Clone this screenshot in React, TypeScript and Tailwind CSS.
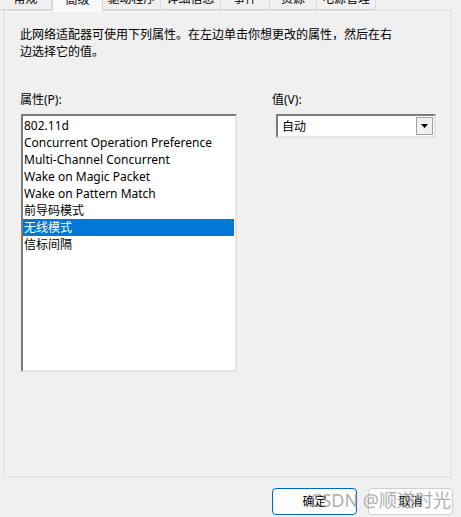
import React from "react";

const tabs = [
  { label: "常规", w: "w-[52px]" },
  { label: "高级", w: "w-[51px]", active: true },
  { label: "驱动程序", w: "w-[58px]" },
  { label: "详细信息", w: "w-[60px]" },
  { label: "事件", w: "w-[49px]" },
  { label: "资源", w: "w-[47px]" },
  { label: "电源管理", w: "w-[59px]" },
];

const items = [
  "802.11d",
  "Concurrent Operation Preference",
  "Multi-Channel Concurrent",
  "Wake on Magic Packet",
  "Wake on Pattern Match",
  "前导码模式",
  "无线模式",
  "信标间隔",
];

const font = { fontFamily: '"Noto Sans", "Noto Sans CJK SC", sans-serif' };

export default function App() {
  return (
    <div
      className="relative w-[461px] h-[517px] overflow-hidden bg-[#f0f0f0] text-[12px] text-black"
      style={font}
    >
      {/* tabs, mostly scrolled off the top */}
      <div className="flex h-[10px] -mt-0 overflow-visible">
        {tabs.map((t) => (
          <div
            key={t.label}
            className={`${t.w} h-[22px] -mt-[12px] flex items-center justify-center leading-[17px] border-r border-[#d9d9d9] ${
              t.active ? "bg-[#f9f9f9] h-[23px] relative z-10 border-l" : "bg-[#f0f0f0] border-b"
            }`}
          >
            {t.label}
          </div>
        ))}
      </div>

      {/* property panel */}
      <div className="ml-[4px] w-[447px] h-[467px] border border-[#dadada] shadow-[inset_1px_1px_0_#fafafa,inset_-1px_-1px_0_#fafafa] bg-[#f0f0f0] pl-[15px] pt-[15px]">
        <p className="w-[380px] leading-[17px]">
          此网络适配器可使用下列属性。在左边单击你想更改的属性，然后在右边选择它的值。
        </p>

        <div className="flex mt-[31px]">
          <div className="w-[252px]">
            <div className="leading-[17px] h-[17px]">属性(P):</div>
            <div className="mt-[6px] ml-[1px] w-[216px] h-[258px] bg-white border-t-2 border-l-2 border-t-[#7a7a7a] border-l-[#7a7a7a] border-r-2 border-b-2 border-r-[#e3e3e3] border-b-[#e3e3e3] pt-[1px] pr-[1px]">
              {items.map((it) => (
                <div
                  key={it}
                  className={`h-[17px] leading-[17px] pl-[1px] whitespace-nowrap ${
                    it === "无线模式" ? "bg-[#0078d7] text-white" : ""
                  }`}
                >
                  {it}
                </div>
              ))}
            </div>
          </div>

          <div>
            <div className="leading-[17px] h-[17px]">值(V):</div>
            <div className="mt-[6px] ml-[4px] w-[160px] h-[24px] bg-white border-2 border-t-[#7a7a7a] border-l-[#7a7a7a] border-r-[#e3e3e3] border-b-[#e3e3e3] flex items-center">
              <span className="flex-1 pl-[4px] leading-[17px]">自动</span>
              <div className="w-[17px] h-[18px] mr-[1px] bg-[#f0f0f0] border border-[#a0a0a0] flex items-center justify-center">
                <svg width="7" height="4" viewBox="0 0 7 4">
                  <path d="M0 0H7L3.5 4Z" fill="#000" />
                </svg>
              </div>
            </div>
          </div>
        </div>
      </div>

      {/* buttons */}
      <div className="flex gap-[11px] ml-[272px] mt-[11px]">
        <button className="w-[85px] h-[27px] rounded-[4px] border border-[#0067c0] bg-[#fdfdfd] text-[12px]">
          确定
        </button>
        <button className="w-[85px] h-[27px] rounded-[4px] border border-[#d0d0d0] bg-[#fdfdfd] text-[12px]">
          取消
        </button>
      </div>

      {/* watermark */}
      <div className="absolute left-[310px] top-[488px] text-[18px] leading-[24px] text-[#8a8a8a]/70 whitespace-nowrap pointer-events-none">
        CSDN @顺遂时光
      </div>
    </div>
  );
}
